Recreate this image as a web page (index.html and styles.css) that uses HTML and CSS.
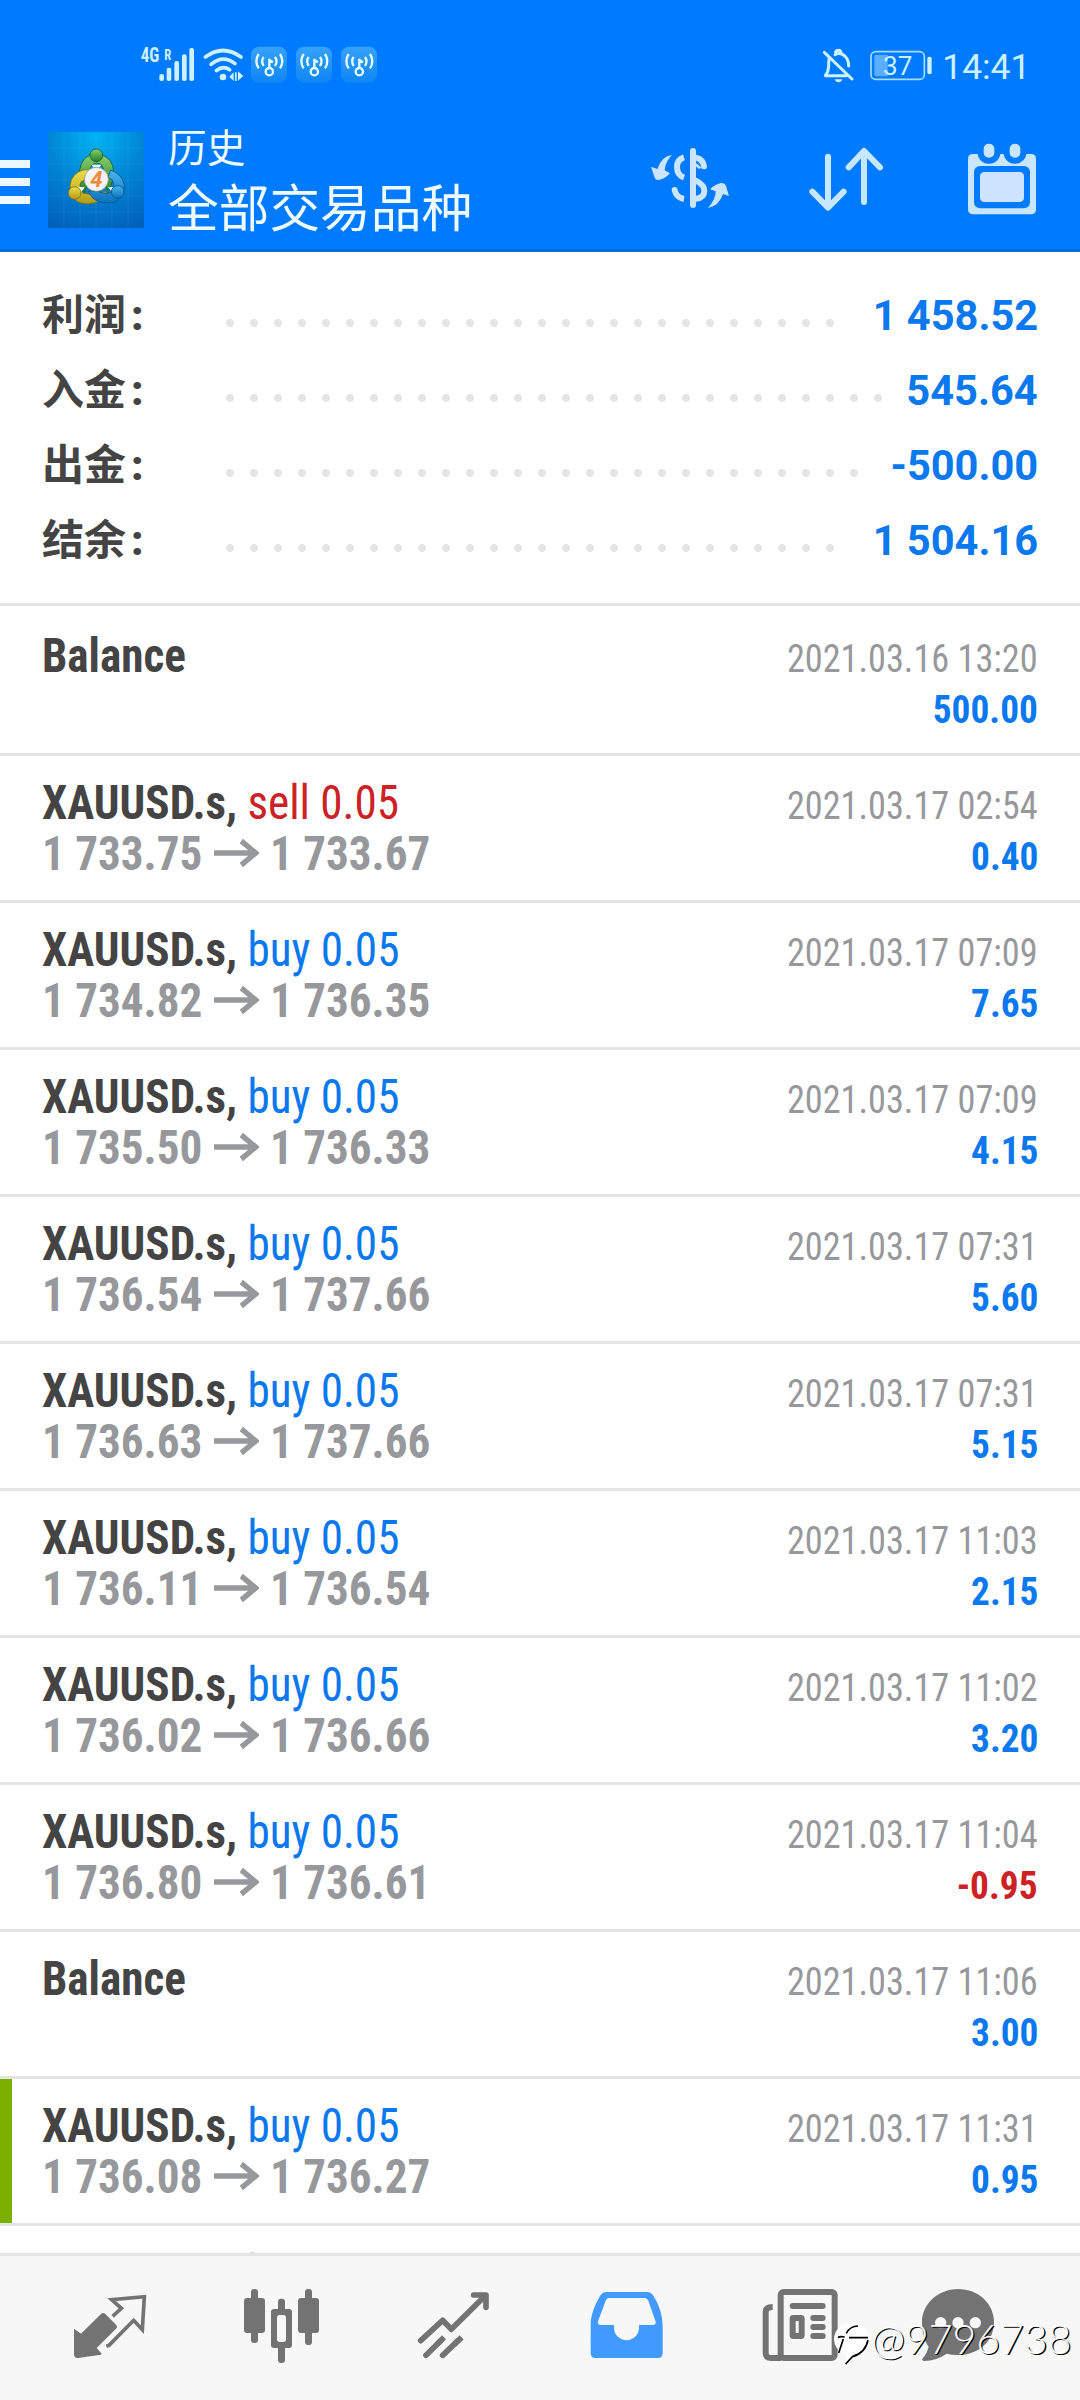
FILE: index.html
```html
<!DOCTYPE html>
<html lang="zh-CN">
<head>
<meta charset="utf-8">
<title>历史</title>
<link rel="stylesheet" href="styles.css">
</head>
<body>
<div class="screen">
  <div class="status">
    <svg class="status-icons" viewBox="0 0 840 210">
      <defs>
        <linearGradient id="tile" x1="0" y1="0" x2="0" y2="1"><stop offset="0" stop-color="#36a2fa"/><stop offset="1" stop-color="#0f86f5"/></linearGradient>
        <g id="hotspot">
          <rect width="108" height="108" rx="24" fill="url(#tile)"/>
          <g fill="none" stroke="#e4fbff" stroke-width="7">
            <circle cx="55" cy="75" r="11"/>
            <path d="M55 64V36M55 40l11 7M38 31q-9 12 0 27M23 22q-14 22 0 43M72 31q9 12 0 27M87 22q14 22 0 43"/>
          </g>
        </g>
      </defs>
      <g fill="#cdf1ff">
        <text class="net" x="62" y="97" font-size="58" textLength="56" lengthAdjust="spacingAndGlyphs">4G</text>
        <text class="net" x="133" y="89" font-size="46" textLength="21" lengthAdjust="spacingAndGlyphs">R</text>
        <rect x="118" y="132" width="14" height="21" rx="6"/><rect x="140" y="113" width="14" height="40" rx="6"/><rect x="163" y="93" width="14" height="60" rx="6"/><rect x="186" y="73" width="14" height="80" rx="6"/><rect x="208" y="54" width="14" height="99" rx="6"/>
        <circle cx="309" cy="141" r="10"/>
        <path d="M328 140l13-13v26zM345 127h5v26h-5zM354 124l16 14-16 14z"/>
      </g>
      <g fill="none" stroke="#cdf1ff" stroke-width="11" stroke-linecap="round"><path d="M256 81Q309 42 363 81M273 103Q309 73 345 101M289 122Q309 106 329 119"/></g>
      <use href="#hotspot" x="393" y="50"/><use href="#hotspot" x="528" y="50"/><use href="#hotspot" x="663" y="50"/>
    </svg>
    <svg class="status-icons" viewBox="0 0 840 210">
      <g fill="none" stroke="#cdf1ff" stroke-width="9" stroke-linecap="round" stroke-linejoin="round">
        <path d="M88 84Q86 90 86 108 86 124 76 137H140M105 74Q116 67 129 74 146 84 146 108M107 72Q105 61 115 61 123 61 123 70" /><path d="M73 67L156 147"/>
      </g>
      <path d="M104 148h23q-3 9-11 9-9 0-12-9z" fill="#cdf1ff"/>
      <rect x="213" y="65" width="160" height="83" rx="14" fill="none" stroke="#a5dcff" stroke-width="5"/>
      <path d="M229 74h34v65h-34q-6 0-6-6V80q0-6 6-6z" fill="#5aaeff"/>
      <rect x="382" y="80" width="13" height="53" rx="6" fill="#cdf1ff"/>
      <text class="clock" x="249" y="135" font-size="78" textLength="88" lengthAdjust="spacingAndGlyphs">37</text>
      <text class="clock" x="427" y="147" font-size="105" textLength="264" lengthAdjust="spacingAndGlyphs">14:41</text>
    </svg>
  </div>

  <header class="appbar">
    <div class="menu"><i></i><i></i><i></i></div>
    <svg class="logo" viewBox="0 0 288 288">
      <defs>
        <radialGradient id="sky" cx=".5" cy=".05" r="1"><stop offset="0" stop-color="#00b3f2"/><stop offset=".5" stop-color="#0084d4"/><stop offset="1" stop-color="#0062bb"/></radialGradient>
        <linearGradient id="gr" x2="0" y2="1"><stop offset="0" stop-color="#8ad06d"/><stop offset="1" stop-color="#22812b"/></linearGradient>
        <linearGradient id="ye" x2="0" y2="1"><stop offset="0" stop-color="#eddf49"/><stop offset="1" stop-color="#b39b16"/></linearGradient>
        <linearGradient id="bl" x2="0" y2="1"><stop offset="0" stop-color="#4db5ee"/><stop offset="1" stop-color="#0872bc"/></linearGradient>
      </defs>
      <rect width="288" height="288" fill="url(#sky)"/>
      <path d="M48 0V288M96 0V288M144 0V288M192 0V288M240 0V288M0 48H288M0 96H288M0 144H288M0 192H288M0 240H288" stroke="#7fd0ff" stroke-opacity=".17" stroke-width="2"/>
      <g stroke-width="2.500">
        <path d="M108 184Q83 142 99 98 111 67 145 66 182 68 194 101 204 142 180 176L167 151Q174 114 160 98 145 88 132 99 121 112 128 140z" fill="url(#gr)" stroke="#155f35"/>
        <path d="M126 113Q87 110 70 143 59 174 77 201 102 222 137 213 165 207 178 179L146 181Q126 191 105 183 91 168 99 149L127 138z" fill="url(#ye)" stroke="#776c1c"/>
        <path d="M188 114Q224 127 229 160 226 195 199 210 159 219 134 198L120 177 151 178Q176 190 192 178 203 165 193 144L180 135z" fill="url(#bl)" stroke="#07568d"/>
        <path d="M130 98h30l-14 19zM86 164l24 2-13 18zM180 166l26-1-9 21z" fill="#f5faf0"/>
        <circle cx="145" cy="70" r="19" fill="url(#gr)" stroke="#155f35"/><circle cx="80" cy="183" r="19" fill="url(#ye)" stroke="#776c1c"/><circle cx="209" cy="180" r="19" fill="url(#bl)" stroke="#07568d"/>
        <circle cx="145" cy="142" r="36" fill="#f4f3f2" stroke="#8a9a88"/>
      </g>
      <text class="four" x="145" y="166" text-anchor="middle">4</text>
    </svg>
    <div class="titles">
      <div class="subtitle">历史</div>
      <div class="title">全部交易品种</div>
    </div>
    <div class="actions">
      <svg viewBox="-24 -36 468 423">
        <g fill="none" stroke="#cce5ff" stroke-width="18"><path stroke-linecap="round" d="M219 93V255M228 113Q249 118 252 139M226 181Q253 194 253 212 253 233 228 236M164 210Q168 229 183 234"/><path d="M192 112Q171 118 171 141 171 165 192 173M180 231Q185 236 192 237"/></g>
        <path fill="#cce5ff" d="M156 105Q125 108 112 147L93 140 104 173Q107 181 115 180 134 178 150 160L134 151Q136 125 156 105zM264 264Q297 258 309 222L327 228 318 197Q314 188 304 189 286 191 270 208L287 214Q288 237 264 264zM227 128L246 144 236 146 227 139z"/>
      </svg>
      <svg viewBox="444 -36 468 423">
        <path fill="none" stroke="#c6e7ff" stroke-width="18" stroke-linecap="round" stroke-linejoin="round" d="M624 110V262M577 215L624 263 671 215M732 246V93M686 142L732 93 780 142"/>
      </svg>
      <svg viewBox="912 -36 468 423">
        <rect x="1044" y="102" width="204" height="181" rx="14" fill="#c9e6ff"/>
        <rect x="1062" y="138" width="168" height="127" rx="18" fill="#007aff"/>
        <rect x="1080" y="156" width="132" height="90" rx="13" fill="#cce4ff"/>
        <g fill="#c9e6ff" stroke="#007aff" stroke-width="18"><rect x="1082" y="62" width="50" height="60" rx="24"/><rect x="1160" y="62" width="50" height="60" rx="24"/></g>
      </svg>
    </div>
  </header>

  <section class="summary">
    <div class="sum"><span class="label">利润<b>:</b></span><span class="dots" style="width:624px"></span><span class="total">1 458.52</span></div>
    <div class="sum"><span class="label">入金<b>:</b></span><span class="dots" style="width:672px"></span><span class="total">545.64</span></div>
    <div class="sum"><span class="label">出金<b>:</b></span><span class="dots" style="width:648px"></span><span class="total">-500.00</span></div>
    <div class="sum"><span class="label">结余<b>:</b></span><span class="dots" style="width:624px"></span><span class="total">1 504.16</span></div>
  </section>

  <svg class="defs" width="0" height="0"><defs><g id="arrow"><path d="M0 19H45M29 7L44.500 19 29 31" fill="none" stroke="#97989c" stroke-width="5.500"/></g></defs></svg>

  <main class="list">
    <div class="row"><div class="line"><span class="deal sym">Balance</span><span class="date">2021.03.16 13:20</span></div><div class="line"><span class="price">&nbsp;</span><span class="val">500.00</span></div></div>
    <div class="row"><div class="line"><span class="deal"><span class="sym">XAUUSD.s,</span> <span class="sell">sell 0.05</span></span><span class="date">2021.03.17 02:54</span></div><div class="line"><span class="price">1 733.75<svg class="arr"><use href="#arrow"/></svg>1 733.67</span><span class="val">0.40</span></div></div>
    <div class="row"><div class="line"><span class="deal"><span class="sym">XAUUSD.s,</span> <span class="buy">buy 0.05</span></span><span class="date">2021.03.17 07:09</span></div><div class="line"><span class="price">1 734.82<svg class="arr"><use href="#arrow"/></svg>1 736.35</span><span class="val">7.65</span></div></div>
    <div class="row"><div class="line"><span class="deal"><span class="sym">XAUUSD.s,</span> <span class="buy">buy 0.05</span></span><span class="date">2021.03.17 07:09</span></div><div class="line"><span class="price">1 735.50<svg class="arr"><use href="#arrow"/></svg>1 736.33</span><span class="val">4.15</span></div></div>
    <div class="row"><div class="line"><span class="deal"><span class="sym">XAUUSD.s,</span> <span class="buy">buy 0.05</span></span><span class="date">2021.03.17 07:31</span></div><div class="line"><span class="price">1 736.54<svg class="arr"><use href="#arrow"/></svg>1 737.66</span><span class="val">5.60</span></div></div>
    <div class="row"><div class="line"><span class="deal"><span class="sym">XAUUSD.s,</span> <span class="buy">buy 0.05</span></span><span class="date">2021.03.17 07:31</span></div><div class="line"><span class="price">1 736.63<svg class="arr"><use href="#arrow"/></svg>1 737.66</span><span class="val">5.15</span></div></div>
    <div class="row"><div class="line"><span class="deal"><span class="sym">XAUUSD.s,</span> <span class="buy">buy 0.05</span></span><span class="date">2021.03.17 11:03</span></div><div class="line"><span class="price">1 736.11<svg class="arr"><use href="#arrow"/></svg>1 736.54</span><span class="val">2.15</span></div></div>
    <div class="row"><div class="line"><span class="deal"><span class="sym">XAUUSD.s,</span> <span class="buy">buy 0.05</span></span><span class="date">2021.03.17 11:02</span></div><div class="line"><span class="price">1 736.02<svg class="arr"><use href="#arrow"/></svg>1 736.66</span><span class="val">3.20</span></div></div>
    <div class="row"><div class="line"><span class="deal"><span class="sym">XAUUSD.s,</span> <span class="buy">buy 0.05</span></span><span class="date">2021.03.17 11:04</span></div><div class="line"><span class="price">1 736.80<svg class="arr"><use href="#arrow"/></svg>1 736.61</span><span class="val loss">-0.95</span></div></div>
    <div class="row"><div class="line"><span class="deal sym">Balance</span><span class="date">2021.03.17 11:06</span></div><div class="line"><span class="price">&nbsp;</span><span class="val">3.00</span></div></div>
    <div class="row marked"><div class="line"><span class="deal"><span class="sym">XAUUSD.s,</span> <span class="buy">buy 0.05</span></span><span class="date">2021.03.17 11:31</span></div><div class="line"><span class="price">1 736.08<svg class="arr"><use href="#arrow"/></svg>1 736.27</span><span class="val">0.95</span></div></div>
    <div class="row"><div class="line"><span class="deal"><span class="sym">XAUUSD.s,</span> <span class="buy">buy 0.05</span></span></div></div>
  </main>

  <nav class="tabs">
    <svg viewBox="72 78 516 432" fill="#737373">
      <path d="M222 296L243 311 303 252Q310 246 316 252L348 284Q354 290 348 296L290 354 305 371 303 374 234 384Q222 385 222 373z"/>
      <path d="M338 259L364 235 335 209 433 200 427 299 401 271 327 346 319 349" fill="none" stroke="#737373" stroke-width="11"/>
    </svg>
    <svg viewBox="588 78 516 432" fill="#737373">
      <rect x="753" y="177" width="21" height="162" rx="9"/><rect x="732" y="204" width="63" height="105" rx="9"/>
      <rect x="915" y="177" width="21" height="168" rx="9"/><rect x="894" y="204" width="63" height="105" rx="9"/>
      <rect x="834" y="206" width="21" height="193" rx="9"/><rect x="813" y="237" width="63" height="117" rx="9"/><rect x="831" y="255" width="27" height="81" rx="8" fill="#f7f7f7"/>
    </svg>
    <svg viewBox="1104 78 516 432" fill="none" stroke="#737373" stroke-width="17">
      <path stroke-linecap="round" stroke-linejoin="round" d="M1262 332L1328 271 1354 298 1457 196M1421 195H1458V232"/>
      <path stroke-linecap="round" d="M1278 376L1322 332M1328 376L1374 332"/><path d="M1310 344L1332 322M1362 344L1385 322"/>
    </svg>
    <svg viewBox="-60 78 516 432">
      <path fill="#419aff" fill-rule="evenodd" d="M92 284C92 250 109 216 122 195Q128 186 138 186H262Q272 186 278 194C296 220 308 255 308 290V370Q308 384 294 384H106Q92 384 92 370zM146 204Q140 204 137 212L114 274Q112 285 122 285H162V293A37.500 37.500 0 0 0 237 293V285H279Q289 284 287 275L265 212Q262 204 254 204z"/>
    </svg>
    <svg viewBox="456 78 516 432" fill="none" stroke="#737373" stroke-width="18">
      <rect x="662" y="186" width="162" height="198" rx="9"/><path d="M638 231Q617 231 617 246V368Q617 384 634 384H664"/>
      <path stroke-linecap="round" d="M698 228H788M760 264H788M760 291H788M760 318H788"/><rect x="698" y="264" width="27" height="54" rx="2"/>
    </svg>
    <svg viewBox="972 78 516 432">
      <path fill="#737373" d="M1194 177C1255 177 1302 221 1302 276 1302 335 1255 375 1194 375Q1175 375 1160 371 1130 392 1092 393 1084 392 1088 385 1100 372 1106 350C1090 330 1086 300 1086 276 1086 222 1135 177 1194 177z"/>
      <g fill="#f7f7f7"><circle cx="1142" cy="278" r="17"/><circle cx="1194" cy="278" r="17"/><circle cx="1246" cy="278" r="17"/></g>
    </svg>
    <div class="watermark">
      <svg class="wm-logo" viewBox="0 0 114 132">
        <path fill="#fff" d="M57 2A50 50 0 0 1 101 80Q85 98 66 102L42 122 40 98Q3 84 3 52A52 50 0 0 1 57 2z"/>
        <path fill="none" stroke="#000" stroke-width="5" d="M17 93L31 51M40 34Q50 13 75 12M15 47Q20 42 35 45M48 47H105M105 54Q98 92 58 104L38 126"/>
      </svg>
      <span>@9796738</span>
    </div>
  </nav>
</div>
</body>
</html>
```
FILE: styles.css
```css
* { box-sizing: border-box; }
body { margin: 0; background: #fff; font-family: Roboto, "Noto Sans CJK SC", sans-serif; }
svg { display: block; flex: none; }
.screen { width: 1080px; height: 2400px; display: flex; flex-direction: column; overflow: hidden; }

.status { height: 108px; background: #007aff; display: flex; justify-content: space-between; padding: 30px 0 0 120px; flex: none; }
.status-icons { width: 280px; height: 70px; }
.net { font-family: "Roboto Condensed", Roboto, sans-serif; font-weight: 700; }
.clock { fill: #cdf1ff; }

.appbar { height: 144px; background: #007aff; border-bottom: 3px solid #0a6cdb; display: flex; flex: none; }
.menu { width: 30px; display: flex; flex-direction: column; gap: 10px; padding-top: 52px; }
.menu i { height: 8px; background: #ebf8ff; }
.logo { width: 96px; height: 96px; margin: 24px 0 0 18px; }
.four { font-size: 66px; font-weight: 700; font-style: italic; fill: #f18a3c; }
.titles { margin-left: 24px; color: #effbff; white-space: nowrap; }
.subtitle { font-size: 38.700px; line-height: 50px; padding-top: 16px; }
.title { font-size: 50.700px; line-height: 60px; margin-top: 6px; }
.actions { display: flex; margin-left: auto; }
.actions svg { width: 156px; height: 141px; }

.summary { height: 354px; border-bottom: 3px solid #e4e4e4; padding-top: 26px; margin-bottom: 3px; flex: none; }
.sum { height: 75px; display: flex; align-items: center; padding: 0 42px; font-size: 42px; font-weight: 700; line-height: 75px; }
.label { width: 176px; color: #444; white-space: nowrap; }
.label b { margin-left: 5px; }
.dots { height: 24px; background: radial-gradient(circle at 12px 12px, #e4e4e4 3.600px, transparent 4.300px) 0 0 / 24px 24px; margin-top: 15px; flex: none; }
.total { margin-left: auto; color: #0a78ee; white-space: nowrap; transform: scaleX(.99); transform-origin: right; }

.list { flex: 1; min-height: 0; overflow: hidden; font-family: "Roboto Condensed", Roboto, sans-serif; font-stretch: 75%; }
.row { height: 147px; border-bottom: 3px solid #e4e4e4; padding: 21px 42px 0; }
.marked { background: linear-gradient(#7cb000, #7cb000) 0 0 / 12px 144px no-repeat; }
.line { height: 51px; display: flex; justify-content: space-between; align-items: baseline; font-size: 48px; line-height: 51px; white-space: nowrap; }
.deal, .price { transform: scaleX(.94); transform-origin: left; }
.sym { font-weight: 700; color: #444; }
.sell { color: #cc2225; }
.buy { color: #0a78ee; }
.price { font-weight: 700; color: #97989c; }
.arr { display: inline-block; width: 48px; height: 38px; margin: 0 12px 0 12px; vertical-align: -2px; }
.date { font-size: 39px; color: #97989c; transform: scaleX(.93); transform-origin: right; }
.val { font-size: 39px; font-weight: 700; color: #0a78ee; transform: scaleX(.957); transform-origin: right; }
.val.loss { color: #cc2225; }

.tabs { position: relative; height: 147px; background: #f7f7f7; border-top: 3px solid #e4e4e4; display: flex; padding: 0 24px; flex: none; }
.tabs > svg { width: 172px; height: 144px; }
.watermark { position: absolute; left: 833px; top: 66px; display: flex; color: #fff; font: 300 41px/44px Lato, sans-serif; text-shadow: 1.300px 1.300px 0 #000; white-space: nowrap; }
.watermark span { margin-top: -5px; }
.wm-logo { width: 38px; height: 44px; }
```
